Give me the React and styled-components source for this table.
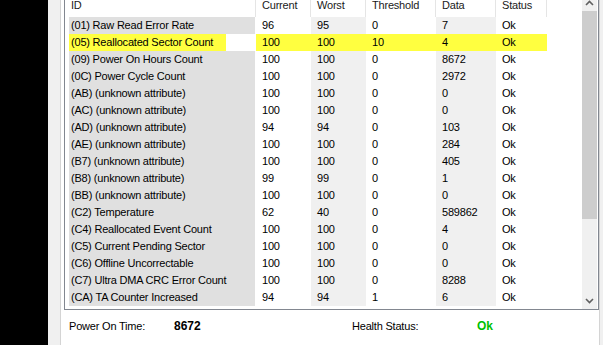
import React from 'react'
import styled, { createGlobalStyle, css } from 'styled-components'

const GlobalStyle = createGlobalStyle`
  html, body {
    margin: 0;
    padding: 0;
    background: #f0f0f0;
    overflow: hidden;
  }
  body {
    font-family: "Liberation Sans", Arial, sans-serif;
    font-size: 11px;
    letter-spacing: -0.2px;
    color: #000;
  }
`

const columns = '191px 55px 55px 70px 60px 51px'

const attributes = [
  ['(01) Raw Read Error Rate', 96, 95, 0, 7],
  ['(05) Reallocated Sector Count', 100, 100, 10, 4, true],
  ['(09) Power On Hours Count', 100, 100, 0, 8672],
  ['(0C) Power Cycle Count', 100, 100, 0, 2972],
  ['(AB) (unknown attribute)', 100, 100, 0, 0],
  ['(AC) (unknown attribute)', 100, 100, 0, 0],
  ['(AD) (unknown attribute)', 94, 94, 0, 103],
  ['(AE) (unknown attribute)', 100, 100, 0, 284],
  ['(B7) (unknown attribute)', 100, 100, 0, 405],
  ['(B8) (unknown attribute)', 99, 99, 0, 1],
  ['(BB) (unknown attribute)', 100, 100, 0, 0],
  ['(C2) Temperature', 62, 40, 0, 589862],
  ['(C4) Reallocated Event Count', 100, 100, 0, 4],
  ['(C5) Current Pending Sector', 100, 100, 0, 0],
  ['(C6) Offline Uncorrectable', 100, 100, 0, 0],
  ['(C7) Ultra DMA CRC Error Count', 100, 100, 0, 8288],
  ['(CA) TA Counter Increased', 94, 94, 1, 6],
]

const App = () => {
  return (
    <>
      <GlobalStyle />
      <Screen>
        <Desktop />
        <Frame />
        <TabPage>
          <ListBox>
            <Table>
              <Header>
                {['ID', 'Current', 'Worst', 'Threshold', 'Data', 'Status'].map((h) => (
                  <HeadCell key={h}>{h}</HeadCell>
                ))}
              </Header>
              {attributes.map(([name, cur, worst, thr, data, warn]) => (
                <Row key={name}>
                  <IdCell>
                    <IdFill $warn={warn}>
                      <IdLabel $warn={warn}>{name}</IdLabel>
                    </IdFill>
                  </IdCell>
                  <Cell $warn={warn}>{cur}</Cell>
                  <Cell $warn={warn} $alt>{worst}</Cell>
                  <Cell $warn={warn}>{thr}</Cell>
                  <Cell $warn={warn} $alt>{data}</Cell>
                  <Cell $warn={warn}>Ok</Cell>
                </Row>
              ))}
            </Table>
            <ScrollBar>
              <ScrollButton>
                <svg width="9" height="6" viewBox="0 0 9 6">
                  <polyline points="1,5 4.5,1.5 8,5" fill="none" stroke="#606060" strokeWidth="1.6" />
                </svg>
              </ScrollButton>
              <Thumb />
              <Track />
              <ScrollButton>
                <svg width="9" height="6" viewBox="0 0 9 6">
                  <polyline points="1,1 4.5,4.5 8,1" fill="none" stroke="#606060" strokeWidth="1.6" />
                </svg>
              </ScrollButton>
            </ScrollBar>
            <Gap />
          </ListBox>
          <Footer>
            <FootLabel>Power On Time:</FootLabel>
            <FootValue>8672</FootValue>
            <FootLabel>Health Status:</FootLabel>
            <FootValue $ok>Ok</FootValue>
          </Footer>
        </TabPage>
        <Edge />
      </Screen>
    </>
  )
}

const Screen = styled.div`
  display: flex;
  width: 603px;
  height: 345px;
  overflow: hidden;
`

const Desktop = styled.div`
  width: 48px;
  background: #000;
`

const Frame = styled.div`
  width: 12px;
  background: #f0f0f0;
  border-right: 1px solid #d4d4d4;
`

const TabPage = styled.div`
  width: 535px;
  padding-left: 3px;
  background: #fff;
  border-right: 1px solid #d4d4d4;
  display: flex;
  flex-direction: column;
`

const Edge = styled.div`
  flex: 1;
  background: #f0f0f0;
`

const ListBox = styled.div`
  margin-top: -7px;
  width: 535px;
  height: 317px;
  box-sizing: border-box;
  border: 1px solid #828790;
  display: flex;
  background: #fff;
`

const Table = styled.div`
  flex: 1;
  overflow: hidden;
`

const Header = styled.div`
  display: grid;
  grid-template-columns: ${columns};
  height: 23px;
`

const HeadCell = styled.div`
  padding-left: 6px;
  line-height: 23px;
  border-right: 1px solid #e5e5e5;
  color: #1a1a1a;
  white-space: nowrap;
`

const Row = styled.div`
  display: grid;
  grid-template-columns: ${columns};
  height: 17px;
  line-height: 17px;
  white-space: nowrap;
`

const IdCell = styled.div`
  display: flex;
  padding: 0 1px 0 4px;
`

const IdFill = styled.div`
  flex: 1;
  background: ${(p) => (p.$warn ? '#fff' : '#e0e0e0')};
`

const IdLabel = styled.span`
  display: inline-block;
  padding: 0 13px 0 2px;
  ${(p) =>
    p.$warn &&
    css`
      background: #ffff40;
    `}
`

const Cell = styled.div`
  padding-left: 6px;
  background: ${(p) => (p.$warn ? '#ffff40' : p.$alt ? '#f0f0f0' : '#fff')};
`

const ScrollBar = styled.div`
  width: 15px;
  display: flex;
  flex-direction: column;
  background: #f0f0f0;
`

const ScrollButton = styled.div`
  height: 17px;
  display: flex;
  align-items: center;
  justify-content: center;
`

const Thumb = styled.div`
  height: 208px;
  background: #cdcdcd;
`

const Track = styled.div`
  flex: 1;
`

const Gap = styled.div`
  width: 1px;
`

const Footer = styled.div`
  display: grid;
  grid-template-columns: 105px 178px 125px 1fr;
  padding: 10px 0 0 5px;
  line-height: 13px;
`

const FootLabel = styled.div`
  color: #000;
`

const FootValue = styled.div`
  font-weight: bold;
  font-size: 12px;
  letter-spacing: 0;
  color: ${(p) => (p.$ok ? '#00c000' : '#000')};
`

export default App
